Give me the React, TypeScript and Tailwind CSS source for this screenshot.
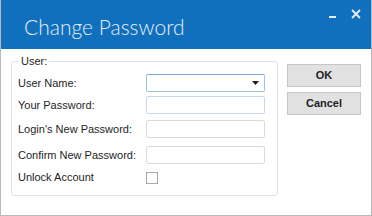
import React from "react";

const labelCls = "w-[128px] shrink-0 text-[11px] leading-[13px] text-[#1e1e1e]";
const boxCls = "w-[119px] h-[18px] bg-white border rounded-[2px]";

function Row({ label, children, className }: { label: string; children: React.ReactNode; className?: string }) {
  return (
    <div className={"flex items-center " + (className ?? "")}>
      <span className={labelCls}>{label}</span>
      {children}
    </div>
  );
}

export default function App() {
  return (
    <div
      className="w-[372px] h-[216px] flex flex-col bg-white border-x border-b border-[#b9b9b9] overflow-hidden"
      style={{ fontFamily: "'Liberation Sans', Arial, sans-serif" }}
    >
      {/* title bar */}
      <div className="h-[49px] shrink-0 bg-[#1170be] flex items-start justify-between -mx-px">
        <div
          className="pl-[24px] pt-[14px] text-[21px] leading-[26px] font-light text-[#e6eef7]"
          style={{ fontFamily: "Lato, 'Noto Sans', sans-serif" }}
        >
          Change Password
        </div>
        <div className="flex items-center gap-[15px] pt-[9px] pr-[11px]">
          <svg width="7" height="10" viewBox="0 0 7 10">
            <rect x="0" y="7" width="7" height="2" fill="#e6eef7" />
          </svg>
          <svg width="10" height="10" viewBox="0 0 10 10">
            <path d="M1 1 L9 9 M9 1 L1 9" stroke="#e6eef7" strokeWidth="1.8" />
          </svg>
        </div>
      </div>

      {/* body */}
      <div className="flex pl-[10px] pr-[10px] pt-[6px] gap-[9px]">
        <fieldset className="w-[268px] h-[141px] border border-[#dbe3ec] rounded-[3px] pl-[6px] pr-[6px] m-0 min-w-0">
          <legend className="ml-[1px] px-[2px] text-[11px] leading-[13px] text-[#1e1e1e]">User:</legend>
          <Row label="User Name:" className="mt-[6px]">
            <div className={boxCls + " border-[#9fc3e8] border-t-[#7aa9d8] flex items-center justify-end pr-[5px]"}>
              <svg width="7" height="4" viewBox="0 0 7 4">
                <path d="M0 0 H7 L3.5 4 Z" fill="#1e1e1e" />
              </svg>
            </div>
          </Row>
          <Row label="Your Password:" className="mt-[4px]">
            <div className={boxCls + " border-[#c6d9ec]"} />
          </Row>
          <Row label="Login's New Password:" className="mt-[6px]">
            <div className={boxCls + " border-[#dadada]"} />
          </Row>
          <Row label="Confirm New Password:" className="mt-[8px]">
            <div className={boxCls + " border-[#dadada]"} />
          </Row>
          <Row label="Unlock Account" className="mt-[7px]">
            <div className="w-[12px] h-[12px] border border-[#a8a8a8] bg-white" />
          </Row>
        </fieldset>

        <div className="flex flex-col gap-[5px] pt-[9px]">
          <button className="w-[74px] h-[23px] bg-[#e1e1e1] border border-[#c6c6c6] text-[11px] font-bold text-[#1e1e1e]">
            OK
          </button>
          <button className="w-[74px] h-[23px] bg-[#e1e1e1] border border-[#c6c6c6] text-[11px] font-bold text-[#1e1e1e]">
            Cancel
          </button>
        </div>
      </div>
    </div>
  );
}
